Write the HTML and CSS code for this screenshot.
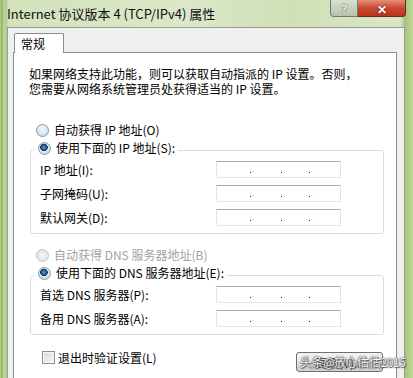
FILE: index.html
```html
<!DOCTYPE html>
<html lang="zh-CN">
<head>
  <meta charset="UTF-8">
  <title>Internet 协议版本 4 (TCP/IPv4) 属性</title>
  <link rel="stylesheet" href="styles.css">
</head>
<body>
  <div class="window">
    <div class="titlebar">
      <span class="title">Internet 协议版本 4 (TCP/IPv4) 属性</span>
      <div class="caption">
        <span class="cap help">?</span>
        <span class="cap close">✕</span>
      </div>
    </div>

    <div class="face">
      <div class="tabs"><span class="tab">常规</span></div>
      <div class="panel">
        <p class="desc">如果网络支持此功能，则可以获取自动指派的 IP 设置。否则，<br>您需要从网络系统管理员处获得适当的 IP 设置。</p>

        <label class="radio first"><span class="dot-radio"></span>自动获得 IP 地址(O)</label>
        <fieldset class="group">
          <legend><label class="radio"><span class="dot-radio on"></span>使用下面的 IP 地址(S):</label></legend>
          <div class="row"><span>IP 地址(I):</span><div class="ip"><i></i><i></i><i></i></div></div>
          <div class="row"><span>子网掩码(U):</span><div class="ip"><i></i><i></i><i></i></div></div>
          <div class="row"><span>默认网关(D):</span><div class="ip"><i></i><i></i><i></i></div></div>
        </fieldset>

        <label class="radio off dns"><span class="dot-radio"></span>自动获得 DNS 服务器地址(B)</label>
        <fieldset class="group">
          <legend><label class="radio"><span class="dot-radio on"></span>使用下面的 DNS 服务器地址(E):</label></legend>
          <div class="row"><span>首选 DNS 服务器(P):</span><div class="ip"><i></i><i></i><i></i></div></div>
          <div class="row"><span>备用 DNS 服务器(A):</span><div class="ip"><i></i><i></i><i></i></div></div>
        </fieldset>

        <div class="footer">
          <label class="check"><span class="box"></span>退出时验证设置(L)</label>
          <div class="btn-wrap">
            <button class="btn">高级(V)...</button>
            <span class="mark">头条@放心估估2015</span>
          </div>
        </div>
      </div>
    </div>
  </div>
</body>
</html>
```

FILE: styles.css
```css
body { margin:0; font-family:"Noto Sans CJK SC", sans-serif; font-size:12px; color:#000; }

.window {
  width:413px; height:378px; overflow:hidden; box-sizing:border-box;
  padding:0 8px 0 7px;
  background:linear-gradient(90deg, #b9d195 0px, #8fb35e 2px, #c6dba6 4px, #a9c785 6px, #d2e2bb 8px, #dbe8c9 45%, #cfe0b6 70%, #d9e6c6 97%, #a5c47a 98%, #c2d89c 100%);
}

/* title bar */
.titlebar { height:27px; display:flex; align-items:flex-start; position:relative; }
.title { font-size:13px; line-height:27px; color:#111; }
.caption { position:absolute; top:0; right:-1px; display:flex; }
.cap { height:17px; display:flex; align-items:center; justify-content:center; font-weight:bold; color:#fff; box-sizing:border-box; }
.help {
  width:28px; font-size:12px; color:#e8ece4; text-shadow:0 0 2px #3d4a3a;
  background:linear-gradient(#d9e1d2, #b6c2ad); border:1px solid #6f7c6a; border-top:0; border-radius:0 0 0 4px;
}
.close {
  width:48px; font-size:12px; text-shadow:0 0 2px #5a1008;
  background:linear-gradient(#e48f78, #c94a30 50%, #b8331c); border:1px solid #5f2a20; border-top:0; border-left:0; border-radius:0 0 4px 0;
}

/* dialog face */
.face { background:#f0f0f0; border:1px solid #93a08b; border-bottom:0; height:351px; box-sizing:border-box; padding:5px 7px 0 5px; }
.tabs { display:flex; padding-left:1px; }
.tab {
  position:relative; z-index:1; width:50px; height:20px; box-sizing:border-box;
  background:#fff; border:1px solid #898c95; border-bottom:0; border-radius:2px 2px 0 0;
  padding-left:6px; line-height:20px; font-size:12px; margin-bottom:-1px;
}
.panel { background:#fff; border:1px solid #898c95; height:400px; padding:13px 12px 0 15px; box-sizing:border-box; }

.desc { margin:0; line-height:15px; }

.radio { display:flex; align-items:center; height:16px; line-height:16px; }
.radio.first { margin:26px 0 2px 7px; }
.radio.dns { margin:13px 0 2px 7px; }
.radio.off { color:#a2a2a2; }
.dot-radio {
  width:11px; height:11px; border-radius:50%; margin-right:5px; flex:none;
  border:1px solid #8a9aa8;
  background:radial-gradient(circle at 50% 40%, #eef4f9 20%, #c9dbe9 75%, #b5cbdc);
}
.radio.off .dot-radio { border-color:#c4c4c4; background:radial-gradient(#f4f4f4, #e0e0e0); }
.dot-radio.on { background:radial-gradient(circle at 45% 40%, #6fa0d0 0, #1d4f86 28%, #163c66 40%, #dfe9f2 45%, #c9dbe9 80%); }

.group {
  margin:0 0 0 1px; padding:0 9px 7px 9px; border:1px solid #d5dfe5; border-radius:3px;
  display:flex; flex-direction:column; gap:7px;
}
.group legend { padding:0 3px 0 4px; margin-left:-6px; }
.group legend .radio { margin-bottom:5px; }

.row { display:grid; grid-template-columns:176px 125px; align-items:center; height:17px; }
.ip {
  height:17px; box-sizing:border-box; background:#fff;
  border:1px solid #e2e3ea; border-top-color:#abadb3; border-bottom-color:#e3e9ef;
  display:flex; align-items:flex-end; padding-bottom:4px;
}
.ip i { width:1px; height:1px; background:#222; box-shadow:2px -1px 0 #d8d8d8, 3px 0 0 #e0e0e0; }
.ip i:nth-child(1) { margin-left:33px; }
.ip i:nth-child(2) { margin-left:30px; }
.ip i:nth-child(3) { margin-left:27px; }

.footer { display:flex; justify-content:space-between; align-items:flex-start; margin-top:14px; padding-right:1px; }
.check { display:flex; align-items:center; height:16px; margin-left:13px; }
.box {
  width:11px; height:11px; margin-right:3px; border:1px solid #8f8f8f;
  background:linear-gradient(135deg, #dcdcdc, #f4f4f4);
  box-shadow:inset 0 0 0 1px #f6f6f6;
}
.btn-wrap { position:relative; margin-top:3px; }
.btn {
  width:87px; height:20px; padding:0; font-family:inherit; font-size:12px; color:#333;
  border:1px solid #707070; border-radius:3px;
  background:linear-gradient(#f2f2f2, #ebebeb 50%, #dddddd 51%, #cfcfcf);
}
.mark {
  position:absolute; left:4px; top:0; line-height:20px; font-size:12px; letter-spacing:-0.4px; white-space:nowrap;
  color:#f4f4f4; text-shadow:0 0 1px #333, 0 0 2px #555, 1px 1px 1px #666;
}
```
